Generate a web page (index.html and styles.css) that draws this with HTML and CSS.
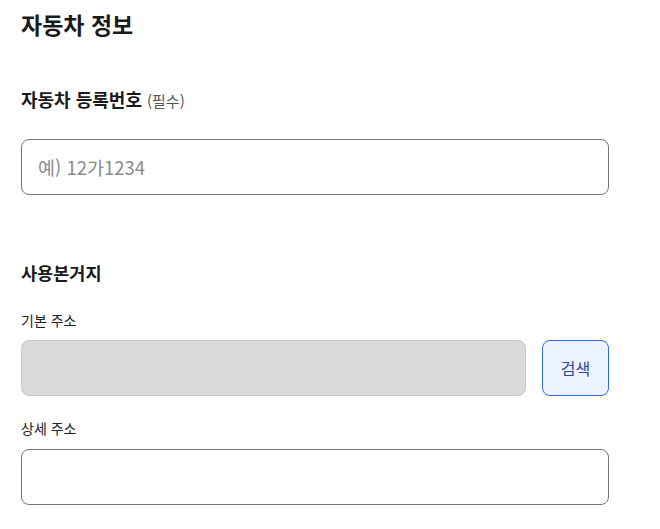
FILE: index.html
```html
<!DOCTYPE html>
<html lang="ko">
<head>
<meta charset="utf-8">
<link rel="stylesheet" href="styles.css">
</head>
<body>
<main class="page">
  <h1 class="title">자동차 정보</h1>
  <label class="field-label" for="plate">자동차 등록번호 <span class="req">(필수)</span></label>
  <input id="plate" class="text-input" type="text" placeholder="예) 12가1234">

  <h2 class="section-title">사용본거지</h2>
  <div class="sub-label">기본 주소</div>
  <div class="addr-row">
    <input class="text-input disabled" type="text" disabled>
    <button class="search-btn" type="button">검색</button>
  </div>
  <div class="sub-label detail">상세 주소</div>
  <input class="text-input detail-input" type="text">
</main>
</body>
</html>
```
FILE: styles.css
```css
* { box-sizing: border-box; }
html, body { margin: 0; padding: 0; background: #fff; }
body {
  font-family: "Noto Sans CJK KR", "Noto Sans", sans-serif;
  color: #1a1a1a;
}
.page {
  width: 630px;
  padding: 0 21px;
  display: flex;
  flex-direction: column;
  align-items: flex-start;
}
.title {
  margin: 8px 0 0;
  font-size: 23px;
  line-height: 32px;
  font-weight: 700;
  color: #1a1a1a;
}
.field-label {
  margin-top: 47px;
  height: 24px;
  font-size: 18px;
  line-height: 24px;
  font-weight: 700;
}
.req {
  font-size: 15px;
  font-weight: 400;
  color: #555;
}
.text-input {
  display: block;
  width: 100%;
  height: 56px;
  margin-top: 28px;
  border: 1px solid #767676;
  border-radius: 8px;
  padding: 0 16px;
  font-family: inherit;
  font-size: 18.5px;
  color: #1a1a1a;
  background: #fff;
  outline: none;
}
.text-input::placeholder { color: #8a8a8a; }
.section-title {
  margin: 66px 0 0;
  font-size: 17.5px;
  line-height: 24px;
  font-weight: 700;
}
.sub-label {
  margin-top: 25px;
  font-size: 14px;
  line-height: 20px;
  color: #222;
}
.sub-label.detail { margin-top: 22px; }
.addr-row {
  margin-top: 10px;
  width: 100%;
  display: flex;
  gap: 16px;
}
.addr-row .text-input {
  margin-top: 0;
  flex: 1;
}
.text-input.disabled {
  background: #d9d9d9;
  border-color: #c9c9c9;
}
.search-btn {
  width: 67px;
  height: 56px;
  border: 1px solid #2a6de6;
  border-radius: 8px;
  background: #eef4ff;
  color: #2346a8;
  font-family: inherit;
  font-size: 16px;
  padding: 0;
}
.detail-input { margin-top: 11px; }
```
